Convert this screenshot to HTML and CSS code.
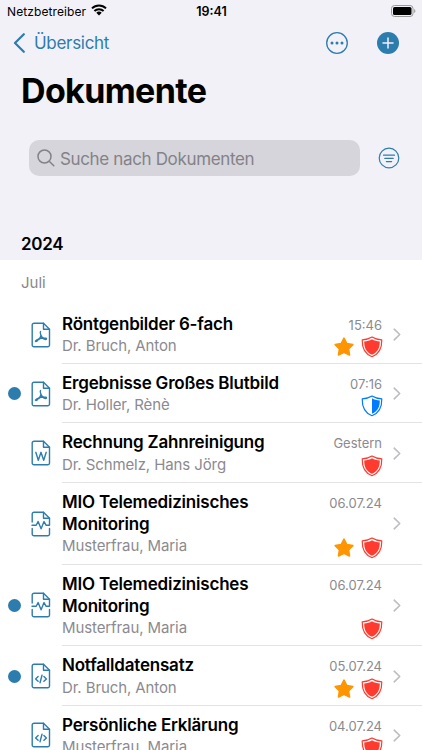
FILE: index.html
```html
<!DOCTYPE html>
<html lang="de">
<head>
  <meta charset="UTF-8">
  <meta name="viewport" content="width=device-width, initial-scale=1.0">
  <title>Dokumente</title>
  <link rel="stylesheet" href="styles.css">
</head>
<body>
  <!-- Shared icons -->
  <svg class="sprite">
    <symbol id="file" viewBox="0 0 20 26">
      <path d="M3 1.2h9.5l6 6V23a1.8 1.8 0 0 1-1.8 1.8H3A1.8 1.8 0 0 1 1.2 23V3A1.8 1.8 0 0 1 3 1.2z"/>
      <path d="M12.5 1.2v6h6"/>
    </symbol>
    <symbol id="pdf" viewBox="0 0 20 26">
      <use href="#file"/>
      <path d="M9.5 9.6c-.7.6.1 2.6.4 3.6.5 1.5 1.8 2.9 3.2 3.9M10 13.4c-.5 1.600-1.200 2.900-2 4.100M7.900 16.800c-1.500.5-3.100 1.400-3.400 2.200-.2.700.8.700 1.600-.1.700-.7 1.200-1.400 1.800-2.100 1.700-.6 3.400-.9 5-.8 1.600 0 2.700.4 2.600 1-.1.700-1.300.5-2.400-.1"/>
    </symbol>
    <symbol id="word" viewBox="0 0 20 26">
      <use href="#file"/>
      <path d="M4.800 12.300l2.500 8 2.700-8 2.700 8 2.500-8"/>
    </symbol>
    <symbol id="pulse" viewBox="0 0 20 26">
      <path d="M1.200 11V3A1.800 1.800 0 0 1 3 1.200h9.500l6 6v7H15l-2-3.700-2.900 7.300-3-7.300-1.900 3.700H1"/>
      <path d="M12.500 1.200v6h6M1.200 17.500V23A1.800 1.800 0 0 0 3 24.800h13.700a1.800 1.800 0 0 0 1.800-1.800v-5.500"/>
    </symbol>
    <symbol id="code" viewBox="0 0 20 26">
      <use href="#file"/>
      <path d="M7.100 13.500l-2.500 2.400 2.500 2.400M12.900 13.500l2.500 2.400-2.500 2.400M11 12.300l-2 7.400"/>
    </symbol>
    <symbol id="star" viewBox="0 0 22 22">
      <path d="M11 2.200l2.800 5.400 6 1-4.300 4.400 1 6-5.500-2.700L5.500 19l1-6-4.300-4.400 6-1z" fill="#ff9500" stroke="#ff9500" stroke-width="1.600" stroke-linejoin="round"/>
    </symbol>
    <symbol id="shield-line" viewBox="0 0 22 22">
      <path d="M11 1.100C8.200 3 5 3.700 1.200 3.800 1 11.500 3.200 17.800 11 20.700c7.800-2.900 10-9.200 9.800-16.900C17 3.700 13.800 3 11 1.100z" fill="none" stroke="currentColor" stroke-width="1.200" stroke-linejoin="round"/>
    </symbol>
    <symbol id="shield" viewBox="0 0 22 22">
      <use href="#shield-line"/>
      <path d="M11 3.200C8.700 4.600 6.200 5.300 3.200 5.500 3.200 11.500 5.100 16.300 11 18.700c5.900-2.400 7.800-7.200 7.800-13.200C15.800 5.300 13.300 4.600 11 3.200z" fill="currentColor"/>
    </symbol>
    <symbol id="shield-half" viewBox="0 0 22 22">
      <use href="#shield-line"/>
      <path d="M11 3.200v15.500c5.900-2.400 7.800-7.200 7.800-13.200C15.800 5.300 13.300 4.600 11 3.200z" fill="currentColor"/>
    </symbol>
    <symbol id="chevron" viewBox="0 0 8 13">
      <path d="M1.200 1.200l5.500 5.300-5.500 5.300"/>
    </symbol>
  </svg>

  <header class="header">
    <div class="status">
      <div class="carrier">
        <span>Netzbetreiber</span>
        <svg width="16" height="12" viewBox="0 0 16 12">
          <path d="M1 4.400a10 10 0 0 1 14 0M3.400 7a6.600 6.600 0 0 1 9.200 0" fill="none" stroke="#000" stroke-width="2"/>
          <path d="M5.300 8.800a3.900 3.900 0 0 1 5.400 0L8 11.500z"/>
        </svg>
      </div>
      <span class="clock">19:41</span>
      <svg class="battery" width="25" height="12" viewBox="0 0 25 12">
        <rect x=".5" y=".5" width="21.500" height="11" rx="3" fill="none" stroke="#999"/>
        <rect x="2" y="2" width="18.500" height="8" rx="1.600"/>
        <path d="M23.300 4v4c1.400-.5 1.400-3.500 0-4z" fill="#888"/>
      </svg>
    </div>

    <nav class="nav">
      <a class="back">
        <svg width="13" height="20" viewBox="0 0 13 20">
          <path d="M10.800 1.200L2 10l8.800 8.800" fill="none" stroke="currentColor" stroke-width="2.200" stroke-linecap="round" stroke-linejoin="round"/>
        </svg>
        <span>Übersicht</span>
      </a>
      <div class="actions">
        <svg width="22" height="22" viewBox="0 0 22 22">
          <circle cx="11" cy="11" r="10.300" fill="none" stroke="currentColor" stroke-width="1.300"/>
          <g fill="currentColor"><circle cx="6" cy="11" r="1.500"/><circle cx="11" cy="11" r="1.500"/><circle cx="16" cy="11" r="1.500"/></g>
        </svg>
        <svg width="22" height="22" viewBox="0 0 22 22">
          <circle cx="11" cy="11" r="11" fill="currentColor"/>
          <path d="M11 6v10M6 11h10" stroke="#f2f1f7" stroke-width="1.500" stroke-linecap="round"/>
        </svg>
      </div>
    </nav>

    <h1>Dokumente</h1>

    <div class="search-row">
      <div class="search">
        <svg width="18" height="18" viewBox="0 0 18 18">
          <path d="M14 7.500a6.500 6.500 0 1 1-13 0 6.500 6.500 0 0 1 13 0zM12.200 12.200l4.600 4.600" fill="none" stroke="currentColor" stroke-width="1.500" stroke-linecap="round"/>
        </svg>
        <span>Suche nach Dokumenten</span>
      </div>
      <svg class="filter" width="22" height="22" viewBox="0 0 22 22">
        <path d="M11 1.200a9.800 9.800 0 1 1 0 19.600 9.800 9.800 0 0 1 0-19.600zM5.500 8.200h11M6.800 11.400h8.400M8.400 14.600h5.200" fill="none" stroke="currentColor" stroke-width="1.200" stroke-linecap="round"/>
      </svg>
    </div>

    <h2>2024</h2>
  </header>

  <main class="list">
    <h3>Juli</h3>

    <div class="row">
      <span class="dot"></span>
      <svg class="doc"><use href="#pdf"/></svg>
      <div class="content">
        <div class="text"><b>Röntgenbilder 6-fach</b><p>Dr. Bruch, Anton</p></div>
        <div class="meta"><time>15:46</time><div class="badges"><svg><use href="#star"/></svg><svg class="red"><use href="#shield"/></svg></div></div>
        <svg class="chevron"><use href="#chevron"/></svg>
      </div>
    </div>

    <div class="row">
      <span class="dot unread"></span>
      <svg class="doc"><use href="#pdf"/></svg>
      <div class="content">
        <div class="text"><b>Ergebnisse Großes Blutbild</b><p>Dr. Holler, Rènè</p></div>
        <div class="meta"><time>07:16</time><div class="badges"><svg class="blue"><use href="#shield-half"/></svg></div></div>
        <svg class="chevron"><use href="#chevron"/></svg>
      </div>
    </div>

    <div class="row">
      <span class="dot"></span>
      <svg class="doc"><use href="#word"/></svg>
      <div class="content">
        <div class="text"><b>Rechnung Zahnreinigung</b><p>Dr. Schmelz, Hans Jörg</p></div>
        <div class="meta"><time>Gestern</time><div class="badges"><svg class="red"><use href="#shield"/></svg></div></div>
        <svg class="chevron"><use href="#chevron"/></svg>
      </div>
    </div>

    <div class="row tall">
      <span class="dot"></span>
      <svg class="doc"><use href="#pulse"/></svg>
      <div class="content">
        <div class="text"><b>MIO Telemedizinisches<br>Monitoring</b><p>Musterfrau, Maria</p></div>
        <div class="meta"><time>06.07.24</time><div class="badges"><svg><use href="#star"/></svg><svg class="red"><use href="#shield"/></svg></div></div>
        <svg class="chevron"><use href="#chevron"/></svg>
      </div>
    </div>

    <div class="row tall">
      <span class="dot unread"></span>
      <svg class="doc"><use href="#pulse"/></svg>
      <div class="content">
        <div class="text"><b>MIO Telemedizinisches<br>Monitoring</b><p>Musterfrau, Maria</p></div>
        <div class="meta"><time>06.07.24</time><div class="badges"><svg class="red"><use href="#shield"/></svg></div></div>
        <svg class="chevron"><use href="#chevron"/></svg>
      </div>
    </div>

    <div class="row">
      <span class="dot unread"></span>
      <svg class="doc"><use href="#code"/></svg>
      <div class="content">
        <div class="text"><b>Notfalldatensatz</b><p>Dr. Bruch, Anton</p></div>
        <div class="meta"><time>05.07.24</time><div class="badges"><svg><use href="#star"/></svg><svg class="red"><use href="#shield"/></svg></div></div>
        <svg class="chevron"><use href="#chevron"/></svg>
      </div>
    </div>

    <div class="row">
      <span class="dot"></span>
      <svg class="doc"><use href="#code"/></svg>
      <div class="content">
        <div class="text"><b>Persönliche Erklärung</b><p>Musterfrau, Maria</p></div>
        <div class="meta"><time>04.07.24</time><div class="badges"><svg class="red"><use href="#shield"/></svg></div></div>
        <svg class="chevron"><use href="#chevron"/></svg>
      </div>
    </div>
  </main>
</body>
</html>
```
FILE: styles.css
```css
* {
  box-sizing: border-box;
}
html, body {
  height: 750px;
  overflow: hidden;
}
body {
  margin: 0;
  font-family: Inter, "Liberation Sans", sans-serif;
  background-color: #fff;
  color: #000;
}
h1, h2, h3, p {
  margin: 0;
}
svg {
  display: block;
  flex-shrink: 0;
}
.sprite {
  display: none;
}

/* Header */
.header {
  height: 260px;
  background-color: #f2f1f7;
}
.status {
  display: grid;
  grid-template-columns: 1fr auto 1fr;
  align-items: center;
  height: 22px;
  padding: 0 6px 0 7px;
  font-size: 12px;
}
.carrier {
  display: flex;
  align-items: center;
  gap: 5px;
  letter-spacing: 0.1px;
}
.carrier svg {
  margin-top: -2px;
}
.clock {
  font-weight: 600;
  font-size: 12.5px;
}
.battery {
  justify-self: end;
  margin-top: -1px;
}
.nav {
  display: flex;
  justify-content: space-between;
  align-items: center;
  height: 42px;
  padding: 0 23px 0 13px;
  color: #2d7cae;
}
.back {
  display: flex;
  align-items: center;
  gap: 8px;
  font-size: 17px;
  letter-spacing: -0.3px;
}
.actions {
  display: flex;
  gap: 29px;
}
h1 {
  height: 76px;
  padding-left: 21px;
  font-size: 34px;
  font-weight: 700;
  line-height: 53px;
  letter-spacing: -0.65px;
}
.search-row {
  display: flex;
  align-items: center;
  gap: 18px;
  padding: 0 22px 0 29px;
}
.search {
  display: flex;
  flex: 1;
  align-items: center;
  gap: 5px;
  height: 36px;
  padding-left: 8px;
  border-radius: 10px;
  background-color: #d6d5db;
  color: #838288;
  font-size: 17px;
  letter-spacing: -0.35px;
}
.search span {
  padding-top: 1px;
}
.filter {
  color: #2d7cae;
}
h2 {
  padding: 56px 0 0 21px;
  font-size: 17px;
  font-weight: 600;
  line-height: 25px;
  letter-spacing: -0.3px;
}

/* Document list */
h3 {
  height: 44.9px;
  padding-left: 21px;
  color: #88878c;
  font-size: 15px;
  font-weight: 400;
  line-height: 45px;
}
.row {
  display: flex;
  align-items: center;
  height: 59.3px;
}
.row.tall {
  height: 81.8px;
}
.dot {
  width: 13px;
  height: 13px;
  margin: 0 10px 0 8px;
  border-radius: 50%;
}
.unread {
  background-color: #2d7cae;
}
.doc {
  width: 20px;
  height: 26px;
  margin-right: 11px;
  fill: none;
  stroke: #2d7cae;
  stroke-width: 1.4;
  stroke-linecap: round;
  stroke-linejoin: round;
}
.content {
  display: flex;
  flex: 1;
  align-items: center;
  height: 100%;
  padding-right: 21px;
  border-bottom: 1px solid #e3e3e6;
}
.text {
  flex: 1;
  padding-top: 2px;
}
.text b {
  display: block;
  font-size: 17px;
  font-weight: 600;
  line-height: 22.3px;
  letter-spacing: -0.2px;
}
.text p {
  color: #8b8a8f;
  font-size: 15px;
  line-height: 22px;
  letter-spacing: -0.1px;
}
.meta {
  display: flex;
  flex-direction: column;
  align-items: flex-end;
  justify-content: space-between;
  height: 100%;
  padding: 11px 0 5px;
}
.meta time {
  padding-right: 1px;
  color: #8b8a8f;
  font-size: 13px;
  line-height: 18px;
}
.badges {
  display: flex;
  gap: 6px;
}
.badges svg {
  width: 22px;
  height: 22px;
}
.red {
  color: #ff3b30;
}
.blue {
  color: #007aff;
}
.chevron {
  width: 8px;
  height: 13px;
  margin: 1px 0 0 10px;
  fill: none;
  stroke: #bdbdc1;
  stroke-width: 1.6;
  stroke-linecap: round;
  stroke-linejoin: round;
}
```
